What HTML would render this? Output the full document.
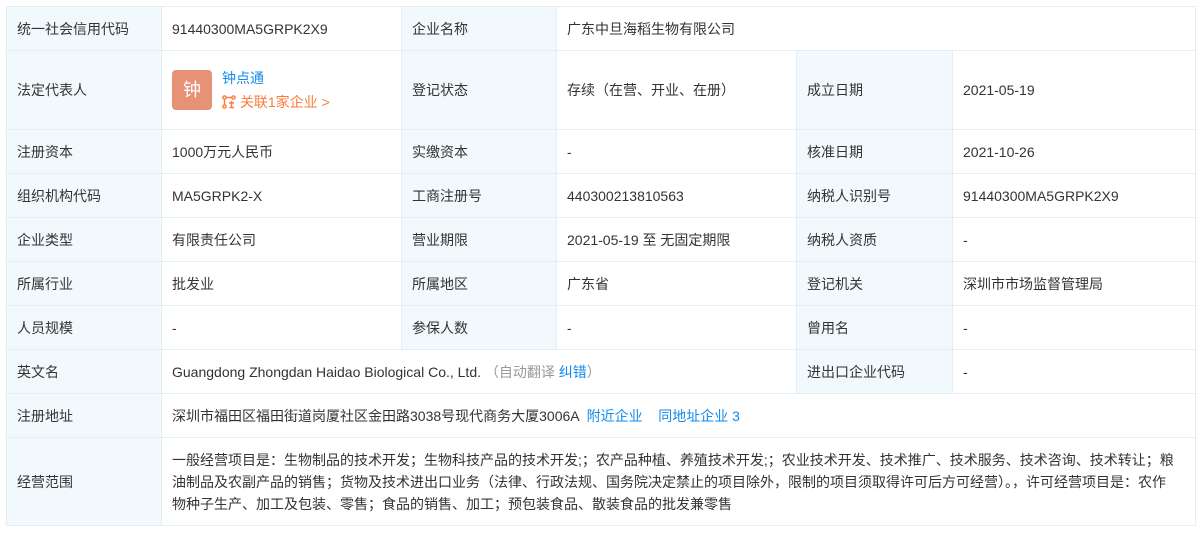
<!DOCTYPE html>
<html><head><meta charset="utf-8"><style>
body{margin:0;background:#fff;font-family:"Liberation Sans","Noto Sans CJK SC",sans-serif;font-size:14px;color:#333;}
table{position:absolute;left:6px;top:6px;border-collapse:collapse;table-layout:fixed;width:1189px;}
td{border:1px solid #e4eef6;padding:0 10px;height:43px;vertical-align:middle;line-height:22px;}
td.l{background:#f2f9fc;}
a{color:#128bed;text-decoration:none;}
.g{color:#999;}
</style></head><body>
<table>
<colgroup><col style="width:155px"><col style="width:240px"><col style="width:155px"><col style="width:240px"><col style="width:156px"><col style="width:243px"></colgroup>
<tr><td class="l">统一社会信用代码</td><td>91440300MA5GRPK2X9</td><td class="l">企业名称</td><td colspan="3">广东中旦海稻生物有限公司</td></tr>
<tr><td class="l" style="height:78px">法定代表人</td><td><div style="display:flex;align-items:center"><div style="width:40px;height:40px;background:#e79177;border-radius:4px;color:#fff;font-size:18px;text-align:center;line-height:40px;margin-right:10px">钟</div><div><div style="color:#128bed">钟点通</div><div style="color:#fd7a3a;margin-top:2px"><svg width="14" height="14" viewBox="0 0 14 14" style="vertical-align:-2px" fill="none" stroke="#fd7a3a" stroke-width="1.4"><circle cx="2.5" cy="2.5" r="1.6"/><circle cx="11.5" cy="2.5" r="1.6"/><circle cx="2.5" cy="11.5" r="1.6"/><path d="M4.1 2.5h5.8M2.5 4.1v5.8M7 8h5M9.5 6v6.5M7.5 12.5h4.5"/></svg> 关联1家企业 &gt;</div></div></div></td><td class="l">登记状态</td><td>存续（在营、开业、在册）</td><td class="l">成立日期</td><td>2021-05-19</td></tr>
<tr><td class="l">注册资本</td><td>1000万元人民币</td><td class="l">实缴资本</td><td>-</td><td class="l">核准日期</td><td>2021-10-26</td></tr>
<tr><td class="l">组织机构代码</td><td>MA5GRPK2-X</td><td class="l">工商注册号</td><td>440300213810563</td><td class="l">纳税人识别号</td><td>91440300MA5GRPK2X9</td></tr>
<tr><td class="l">企业类型</td><td>有限责任公司</td><td class="l">营业期限</td><td>2021-05-19 至 无固定期限</td><td class="l">纳税人资质</td><td>-</td></tr>
<tr><td class="l">所属行业</td><td>批发业</td><td class="l">所属地区</td><td>广东省</td><td class="l">登记机关</td><td>深圳市市场监督管理局</td></tr>
<tr><td class="l">人员规模</td><td>-</td><td class="l">参保人数</td><td>-</td><td class="l">曾用名</td><td>-</td></tr>
<tr><td class="l">英文名</td><td colspan="3">Guangdong Zhongdan Haidao Biological Co., Ltd. <span class="g">（自动翻译 <a>纠错</a>）</span></td><td class="l">进出口企业代码</td><td>-</td></tr>
<tr><td class="l">注册地址</td><td colspan="5">深圳市福田区福田街道岗厦社区金田路3038号现代商务大厦3006A &nbsp;<a>附近企业</a> &nbsp;&nbsp;&nbsp;<a>同地址企业 3</a></td></tr>
<tr><td class="l" style="height:87px">经营范围</td><td colspan="5" style="padding-right:16px">一般经营项目是：生物制品的技术开发；生物科技产品的技术开发;；农产品种植、养殖技术开发;；农业技术开发、技术推广、技术服务、技术咨询、技术转让；粮油制品及农副产品的销售；货物及技术进出口业务（法律、行政法规、国务院决定禁止的项目除外，限制的项目须取得许可后方可经营）。，许可经营项目是：农作物种子生产、加工及包装、零售；食品的销售、加工；预包装食品、散装食品的批发兼零售</td></tr>
</table>
</body></html>
